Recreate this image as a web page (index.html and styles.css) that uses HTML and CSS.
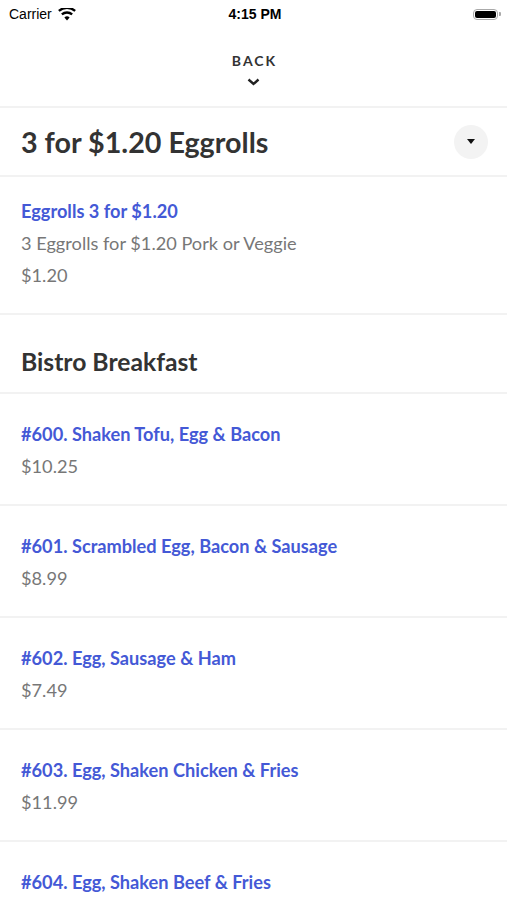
FILE: index.html
```html
<!DOCTYPE html>
<html lang="en">
<head>
    <meta charset="UTF-8">
    <meta name="viewport" content="width=device-width, initial-scale=1.0">
    <title>Menu</title>
    <link rel="stylesheet" href="styles.css">
</head>
<body>
    <div class="status-bar">
        <div class="carrier">
            Carrier
            <svg class="wifi" width="18" height="13" viewBox="0 0 18 13">
                <path d="M9 12.5l2.6-3.1a4 4 0 0 0-5.2 0z" fill="#000"/>
                <path d="M4.6 7.3a6.8 6.8 0 0 1 8.8 0l1.5-1.8a9.2 9.2 0 0 0-11.8 0z" fill="#000"/>
                <path d="M1.6 3.8a11.4 11.4 0 0 1 14.8 0L17.9 2A13.8 13.8 0 0 0 0.1 2z" fill="#000"/>
            </svg>
        </div>
        <div class="time">4:15 PM</div>
        <div class="battery">
            <div class="battery-body"><div class="battery-fill"></div></div>
            <div class="battery-cap"></div>
        </div>
    </div>

    <div class="nav">
        <span class="back">BACK</span>
        <svg class="chevron" width="13" height="8" viewBox="0 0 13 8">
            <path d="M1.5 1.5l5 4.5 5-4.5" fill="none" stroke="#222" stroke-width="2.4"/>
        </svg>
    </div>

    <div class="category">
        <h1>3 for $1.20 Eggrolls</h1>
        <button class="toggle"><span class="caret"></span></button>
    </div>

    <div class="item first">
        <div class="item-name">Eggrolls 3 for $1.20</div>
        <div class="item-desc">3 Eggrolls for $1.20 Pork or Veggie</div>
        <div class="item-price">$1.20</div>
    </div>

    <div class="section">Bistro Breakfast</div>

    <div class="item">
        <div class="item-name">#600. Shaken Tofu, Egg &amp; Bacon</div>
        <div class="item-price">$10.25</div>
    </div>
    <div class="item">
        <div class="item-name">#601. Scrambled Egg, Bacon &amp; Sausage</div>
        <div class="item-price">$8.99</div>
    </div>
    <div class="item">
        <div class="item-name">#602. Egg, Sausage &amp; Ham</div>
        <div class="item-price">$7.49</div>
    </div>
    <div class="item">
        <div class="item-name">#603. Egg, Shaken Chicken &amp; Fries</div>
        <div class="item-price">$11.99</div>
    </div>
    <div class="item">
        <div class="item-name">#604. Egg, Shaken Beef &amp; Fries</div>
        <div class="item-price">$6.99</div>
    </div>
</body>
</html>
```

FILE: styles.css
```css
:root {
    --text-dark: #333;
    --text-gray: #777;
    --link: #4459d6;
    --divider: #f2f2f2;
}
body {
    margin: 0;
    font-family: Lato, "Noto Sans", sans-serif;
    background: #fff;
    color: var(--text-dark);
    overflow: hidden;
}
.status-bar {
    height: 28px;
    display: flex;
    align-items: center;
    justify-content: space-between;
    padding: 0 6px 0 9px;
    font-family: "Liberation Sans", Arial, sans-serif;
    font-size: 14px;
    color: #000;
}
.carrier {
    display: flex;
    align-items: center;
    gap: 6px;
    width: 120px;
}
.time {
    font-weight: bold;
    font-size: 14px;
}
.battery {
    width: 120px;
    display: flex;
    justify-content: flex-end;
    align-items: center;
}
.battery-body {
    width: 25px;
    height: 11px;
    border: 1px solid #aaa;
    border-radius: 4px;
    padding: 1px;
    box-sizing: border-box;
}
.battery-fill {
    width: 100%;
    height: 100%;
    background: #000;
    border-radius: 2px;
}
.battery-cap {
    width: 2px;
    height: 4px;
    background: #aaa;
    border-radius: 0 1px 1px 0;
    margin-left: 1px;
}
.nav {
    height: 80px;
    display: flex;
    flex-direction: column;
    align-items: center;
    padding-top: 24px;
    box-sizing: border-box;
    border-bottom: 2px solid var(--divider);
}
.back {
    font-size: 14px;
    font-weight: bold;
    letter-spacing: 2px;
    color: #333;
    margin-right: -2px;
}
.chevron {
    margin-top: 9px;
}
.category {
    height: 67px;
    display: flex;
    align-items: center;
    justify-content: space-between;
    padding: 0 19px 0 21px;
    border-bottom: 2px solid var(--divider);
}
h1 {
    margin: 0;
    font-size: 28.7px;
    font-weight: bold;
    color: var(--text-dark);
}
.toggle {
    width: 34px;
    height: 34px;
    border: none;
    border-radius: 50%;
    background: #f3f3f3;
    display: flex;
    align-items: center;
    justify-content: center;
    padding: 0;
}
.caret {
    width: 0;
    height: 0;
    border-left: 4px solid transparent;
    border-right: 4px solid transparent;
    border-top: 5px solid #111;
}
.item {
    padding: 24px 21px 22px;
    border-bottom: 2px solid var(--divider);
    font-size: 18.2px;
    line-height: 32px;
}
.item.first {
    padding-top: 18px;
}
.item-name {
    color: var(--link);
    font-weight: bold;
}
.item-desc,
.item-price {
    color: var(--text-gray);
}
.section {
    padding: 32px 21px 15px;
    font-size: 24.7px;
    line-height: 30px;
    font-weight: bold;
    border-bottom: 2px solid var(--divider);
}
```
